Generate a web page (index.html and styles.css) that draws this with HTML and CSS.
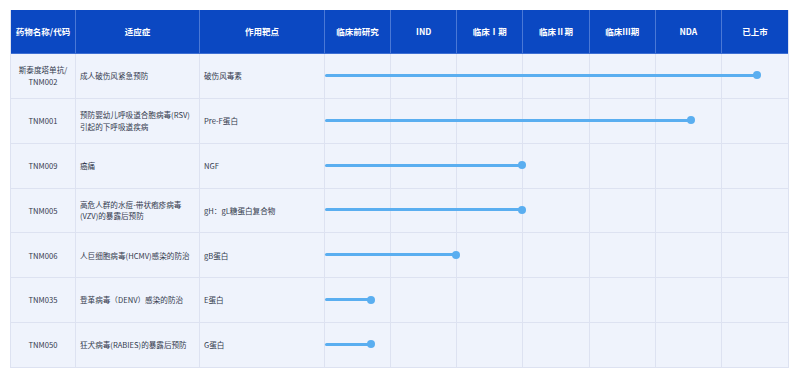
FILE: index.html
```html
<!DOCTYPE html>
<html lang="zh-CN">
<head>
<meta charset="utf-8">
<link rel="stylesheet" href="styles.css">
</head>
<body>
<div class="pipeline">
  <div class="row head">
    <div class="cell">药物名称/代码</div>
    <div class="cell">适应症</div>
    <div class="cell">作用靶点</div>
    <div class="cell">临床前研究</div>
    <div class="cell">IND</div>
    <div class="cell">临床Ⅰ期</div>
    <div class="cell">临床Ⅱ期</div>
    <div class="cell">临床Ⅲ期</div>
    <div class="cell">NDA</div>
    <div class="cell">已上市</div>
  </div>

  <div class="row">
    <div class="cell c">斯泰度塔单抗/<br>TNM002</div>
    <div class="cell">成人破伤风紧急预防</div>
    <div class="cell">破伤风毒素</div>
    <div class="stages"><span></span><span></span><span></span><span></span><span></span><span></span><span></span><div class="bar" style="width:432px"></div></div>
  </div>
  <div class="row">
    <div class="cell c">TNM001</div>
    <div class="cell">预防婴幼儿呼吸道合胞病毒(RSV)<br>引起的下呼吸道疾病</div>
    <div class="cell">Pre-F蛋白</div>
    <div class="stages"><span></span><span></span><span></span><span></span><span></span><span></span><span></span><div class="bar" style="width:366px"></div></div>
  </div>
  <div class="row">
    <div class="cell c">TNM009</div>
    <div class="cell">癌痛</div>
    <div class="cell">NGF</div>
    <div class="stages"><span></span><span></span><span></span><span></span><span></span><span></span><span></span><div class="bar" style="width:197px"></div></div>
  </div>
  <div class="row">
    <div class="cell c">TNM005</div>
    <div class="cell">高危人群的水痘-带状疱疹病毒<br>(VZV)的暴露后预防</div>
    <div class="cell">gH：gL糖蛋白复合物</div>
    <div class="stages"><span></span><span></span><span></span><span></span><span></span><span></span><span></span><div class="bar" style="width:197px"></div></div>
  </div>
  <div class="row">
    <div class="cell c">TNM006</div>
    <div class="cell">人巨细胞病毒(HCMV)感染的防治</div>
    <div class="cell">gB蛋白</div>
    <div class="stages"><span></span><span></span><span></span><span></span><span></span><span></span><span></span><div class="bar" style="width:131px"></div></div>
  </div>
  <div class="row">
    <div class="cell c">TNM035</div>
    <div class="cell">登革病毒（DENV）感染的防治</div>
    <div class="cell">E蛋白</div>
    <div class="stages"><span></span><span></span><span></span><span></span><span></span><span></span><span></span><div class="bar" style="width:46px"></div></div>
  </div>
  <div class="row last">
    <div class="cell c">TNM050</div>
    <div class="cell">狂犬病毒(RABIES)的暴露后预防</div>
    <div class="cell">G蛋白</div>
    <div class="stages"><span></span><span></span><span></span><span></span><span></span><span></span><span></span><div class="bar" style="width:46px"></div></div>
  </div>
</div>
</body>
</html>
```

FILE: styles.css
```css
* { box-sizing: border-box; }
html, body { margin: 0; padding: 0; background: #ffffff; }
body {
  font-family: "Noto Sans CJK SC", "Noto Sans", sans-serif;
  font-size: 7.6px;
  color: #333a4d;
  padding: 10px 0 0 10px;
}
.pipeline {
  width: 779px;
  border-left: 1px solid #dde2f1;
  border-right: 1px solid #dde2f1;
  background: #eff3fc;
}
.row {
  display: grid;
  grid-template-columns: 65px 124px 125px 1fr;
  height: 44.85px;
  border-bottom: 1px solid #dde2f1;
}
.row.head {
  grid-template-columns: 65px 124px 125px repeat(7, 1fr);
  height: 44px;
  background: #0b48c2;
  border-bottom: 1px solid #3e6fd3;
  color: #ffffff;
  font-weight: 700;
  font-size: 8.5px;
}
.row.head .cell {
  justify-content: center;
  text-align: center;
  border-right: 1px solid #4a78d6;
  padding: 0;
}
.row.head .cell:last-child { border-right: none; }
.cell {
  display: flex;
  align-items: center;
  padding: 0 4px;
  border-right: 1px solid #dde2f1;
  line-height: 11.5px;
  white-space: nowrap;
}
.cell.c {
  justify-content: center;
  text-align: center;
}
.stages {
  position: relative;
  display: grid;
  grid-template-columns: repeat(7, 1fr);
}
.stages span { border-right: 1px solid #dde2f1; }
.stages span:last-of-type { border-right: none; }
.bar {
  position: absolute;
  left: 0;
  top: 50%;
  height: 3px;
  margin-top: -2px;
  background: #5aaef0;
  border-radius: 2px;
}
.bar::after {
  content: "";
  position: absolute;
  right: -4px;
  top: -2.5px;
  width: 8px;
  height: 8px;
  border-radius: 50%;
  background: #5aaef0;
}
```
